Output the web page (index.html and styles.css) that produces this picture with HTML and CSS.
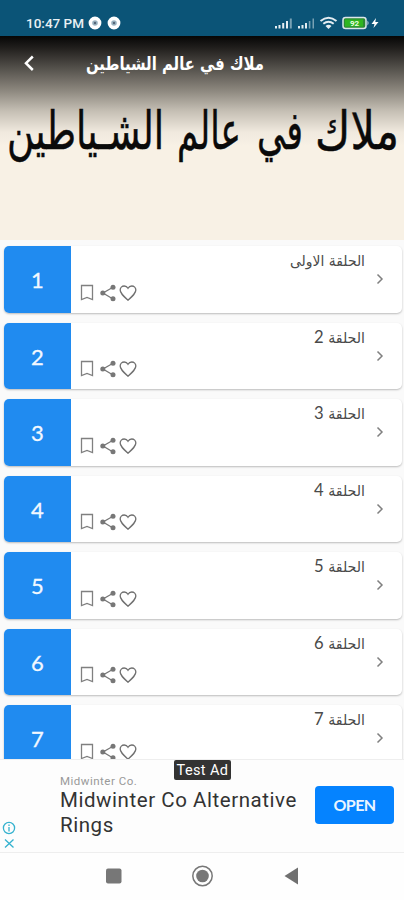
FILE: index.html
```html
<!DOCTYPE html>
<html lang="ar">
<head>
<meta charset="utf-8">
<title>ملاك في عالم الشياطين</title>
<link rel="stylesheet" href="styles.css">
</head>
<body>
<svg class="defs" width="0" height="0">
  <symbol id="bookmark" viewBox="0 0 14 18"><path d="M1.500 1.500h11v14L7 13.400 1.500 15.500z" fill="none" stroke="#808080" stroke-width="1.300"/></symbol>
  <symbol id="share" viewBox="0 0 16 18"><path d="M13 3.200 3 9l10 6" fill="none" stroke="#777" stroke-width="1.300"/><circle cx="13" cy="3.200" r="2.500" fill="#777"/><circle cx="2.800" cy="9" r="2.500" fill="#777"/><circle cx="13" cy="14.800" r="2.500" fill="#777"/></symbol>
  <symbol id="heart" viewBox="0 0 24 24"><path d="M12 20.600C6 15.200 2.600 12.200 2.600 8.500 2.600 5.700 4.800 3.600 7.500 3.600c1.800 0 3.500 1 4.500 2.700 1-1.700 2.700-2.700 4.500-2.700 2.700 0 4.900 2.100 4.900 4.900 0 3.700-3.400 6.700-9.400 12.100z" fill="none" stroke="#707070" stroke-width="1.600"/></symbol>
  <symbol id="chevron" viewBox="0 0 8 12"><path d="M1.500 1.500 6 6l-4.500 4.500" fill="none" stroke="#808080" stroke-width="1.500"/></symbol>
</svg>
<div class="screen">
  <div class="status">
    <span class="time">10:47 PM</span>
    <svg class="dots" width="34" height="14" viewBox="0 0 34 14"><g fill="#9ab3c1" stroke="#fff" stroke-width="3.600"><circle cx="8" cy="7" r="4.600"/><circle cx="27" cy="7" r="4.600"/></g><circle cx="8" cy="7" r="1.200" fill="#567"/><circle cx="27" cy="7" r="1.200" fill="#567"/></svg>
    <svg class="signals" width="106" height="16" viewBox="0 0 106 16">
      <g fill="#e4edf2"><path d="M1 11h2v2.500H1zM4.500 10h2v3.500h-2zM8.200 8h2v5.500h-2zM12 6h2v7.500h-2zM24 11h2v2.500h-2zM27.500 10h2v3.500h-2zM31 8h2v5.500h-2z"/><path opacity=".5" d="M15.800 3.500h2v10h-2zM34.800 6h1.600v7.500h-1.600zM38.500 3.500H40v10h-1.500z"/></g>
      <g fill="none" stroke="#e4edf2" stroke-width="2"><path d="M46.500 6q8-6.500 16 0M49.300 8.700q5.200-4 10.400 0"/></g><path d="m51.500 10.900 3 3 3-3q-3-2.200-6 0z" fill="#e4edf2"/>
      <rect x="69" y="2.500" width="23" height="11" rx="2.500" fill="#2d8934" stroke="#dce6ea" stroke-width="1.500"/><rect x="71" y="4.500" width="18" height="7" fill="#2fb520"/><path d="M93.500 5.500q2 2.500 0 5z" fill="#dce6ea"/>
      <text x="80.500" y="11" text-anchor="middle" class="pct">92</text>
      <path d="m102 3-4.500 6h3l-1 4 5-6h-3.200z" fill="#fff"/>
    </svg>
  </div>
  <div class="hero">
    <div class="bar">
      <svg class="back" width="12" height="18" viewBox="0 0 12 18"><path d="M9.800 2.500 3 9.200l6.800 6.800" fill="none" stroke="#fff" stroke-width="2.500"/></svg>
      <svg class="bar-title" width="180" height="30"><text x="179" y="21.500" direction="rtl" textLength="178" lengthAdjust="spacingAndGlyphs">ملاك في عالم الشياطين</text></svg>
    </div>
    <svg class="hero-title" width="404" height="104"><g direction="rtl"><text x="399" y="59" textLength="84" lengthAdjust="spacingAndGlyphs">ملاك</text><text x="303" y="59" textLength="46" lengthAdjust="spacingAndGlyphs">في</text><text x="241" y="59" textLength="64" lengthAdjust="spacingAndGlyphs">عالم</text><text x="164" y="59" textLength="157" lengthAdjust="spacingAndGlyphs">الشـياطين</text></g></svg>
  </div>
  <main class="list">
    <article class="card"><div class="num">1</div><div class="body"><svg class="name"><text x="85" y="20" direction="rtl" textLength="75" lengthAdjust="spacingAndGlyphs">الحلقة الاولى</text></svg><div class="actions"><svg class="i-b"><use href="#bookmark"/></svg><svg class="i-s"><use href="#share"/></svg><svg class="i-h"><use href="#heart"/></svg></div></div><svg class="chev"><use href="#chevron"/></svg></article>
    <article class="card"><div class="num">2</div><div class="body"><svg class="name"><text x="85" y="20" direction="rtl" textLength="51" lengthAdjust="spacingAndGlyphs">الحلقة <tspan>2</tspan></text></svg><div class="actions"><svg class="i-b"><use href="#bookmark"/></svg><svg class="i-s"><use href="#share"/></svg><svg class="i-h"><use href="#heart"/></svg></div></div><svg class="chev"><use href="#chevron"/></svg></article>
    <article class="card"><div class="num">3</div><div class="body"><svg class="name"><text x="85" y="20" direction="rtl" textLength="51" lengthAdjust="spacingAndGlyphs">الحلقة <tspan>3</tspan></text></svg><div class="actions"><svg class="i-b"><use href="#bookmark"/></svg><svg class="i-s"><use href="#share"/></svg><svg class="i-h"><use href="#heart"/></svg></div></div><svg class="chev"><use href="#chevron"/></svg></article>
    <article class="card"><div class="num">4</div><div class="body"><svg class="name"><text x="85" y="20" direction="rtl" textLength="51" lengthAdjust="spacingAndGlyphs">الحلقة <tspan>4</tspan></text></svg><div class="actions"><svg class="i-b"><use href="#bookmark"/></svg><svg class="i-s"><use href="#share"/></svg><svg class="i-h"><use href="#heart"/></svg></div></div><svg class="chev"><use href="#chevron"/></svg></article>
    <article class="card"><div class="num">5</div><div class="body"><svg class="name"><text x="85" y="20" direction="rtl" textLength="51" lengthAdjust="spacingAndGlyphs">الحلقة <tspan>5</tspan></text></svg><div class="actions"><svg class="i-b"><use href="#bookmark"/></svg><svg class="i-s"><use href="#share"/></svg><svg class="i-h"><use href="#heart"/></svg></div></div><svg class="chev"><use href="#chevron"/></svg></article>
    <article class="card"><div class="num">6</div><div class="body"><svg class="name"><text x="85" y="20" direction="rtl" textLength="51" lengthAdjust="spacingAndGlyphs">الحلقة <tspan>6</tspan></text></svg><div class="actions"><svg class="i-b"><use href="#bookmark"/></svg><svg class="i-s"><use href="#share"/></svg><svg class="i-h"><use href="#heart"/></svg></div></div><svg class="chev"><use href="#chevron"/></svg></article>
    <article class="card"><div class="num">7</div><div class="body"><svg class="name"><text x="85" y="20" direction="rtl" textLength="51" lengthAdjust="spacingAndGlyphs">الحلقة <tspan>7</tspan></text></svg><div class="actions"><svg class="i-b"><use href="#bookmark"/></svg><svg class="i-s"><use href="#share"/></svg><svg class="i-h"><use href="#heart"/></svg></div></div><svg class="chev"><use href="#chevron"/></svg></article>
  </main>
  <section class="ad" lang="en">
    <svg class="ad-marks" width="14" height="32" viewBox="0 0 14 32"><g fill="none" stroke="#35b2cf" stroke-width="1.300"><circle cx="7" cy="7" r="5.600"/><path d="M7 6v4.500M7 3.500v1.400M3 18.500l8.500 8M11.500 18.500l-8.500 8"/></g></svg>
    <div class="ad-text"><div class="ad-brand">Midwinter Co.</div><div class="ad-head">Midwinter Co Alternative<br>Rings</div></div>
    <div class="open"><span>OPEN</span></div>
    <div class="test">Test Ad</div>
  </section>
  <nav class="nav">
    <svg width="404" height="47" viewBox="0 0 404 47"><rect x="106" y="15.500" width="15.500" height="15" rx="2" fill="#777"/><circle cx="202.500" cy="23" r="9.700" fill="none" stroke="#777" stroke-width="1.500"/><circle cx="202.500" cy="23" r="6.300" fill="#777"/><path d="M284.500 23 298 14.500v17z" fill="#707070"/></svg>
  </nav>
</div>
</body>
</html>
```
FILE: styles.css
```css
* { box-sizing: border-box; }
body { margin: 0; background: #fdfdfd; }
svg { display: block; flex: none; }
.defs { position: absolute; }
.screen { width: 404px; height: 900px; overflow: hidden; display: flex; flex-direction: column; }
.status { height: 36px; flex: none; background: #0b5477; display: flex; align-items: center; padding: 10px 24px 0 26px; }
.time { font: 500 13.5px/16px Roboto, sans-serif; color: #e9f0f4; width: 61px; white-space: nowrap; }
.signals { margin-left: auto; }
.pct { font: 700 8px Roboto, sans-serif; fill: #e8ffe0; }
.hero { height: 204px; flex: none; background: linear-gradient(#060606 0, #211f1d 12px, #8b867d 54px, #c5bfb4 75px, #f0e9de 96px, #f8f1e5 110px); }
.bar { height: 54px; display: flex; align-items: center; padding-left: 23px; }
.bar-title { margin-left: 50px; overflow: visible; }
.bar-title text { font: 700 18px "DejaVu Sans", sans-serif; fill: #fff; }
.hero-title { overflow: visible; }
.hero-title text { font: 53px "DejaVu Sans", sans-serif; fill: #0a0a0a; stroke: #0a0a0a; stroke-width: .5px; }
.list { height: 519px; flex: none; overflow: hidden; background: #fafafa; padding: 6px 2px 0 4px; display: flex; flex-direction: column; gap: 10px; }
.card { height: 66.5px; flex: none; display: flex; background: #fff; border-radius: 5px; box-shadow: 0 1px 2px rgba(0,0,0,.25); overflow: hidden; }
.num { width: 67px; background: #208bf0; color: #f2f8ff; font: 22px/68px Lato, sans-serif; text-align: center; -webkit-text-stroke: .3px #f2f8ff; }
.body { width: 294px; display: flex; flex-direction: column; justify-content: space-between; padding-bottom: 10px; }
.name { width: 85px; height: 28px; align-self: flex-end; overflow: visible; }
.name text { font: 14.5px "DejaVu Sans", sans-serif; fill: #4a4a4a; }
.name tspan { font: 17px Lato, sans-serif; }
.actions { display: flex; align-items: center; padding-left: 9px; height: 20px; }
.i-b { width: 14px; height: 18px; }
.i-s { width: 16px; height: 18px; margin-left: 6px; }
.i-h { width: 20px; height: 20px; margin-left: 2px; }
.chev { width: 8px; height: 12px; margin: 27px 0 0 11px; }
.ad { position: relative; height: 94px; flex: none; background: #fdfdfd; border-top: 1px solid #eee; border-bottom: 1px solid #eee; display: flex; align-items: flex-start; }
.ad-marks { margin: 61px 0 0 2px; }
.ad-text { width: 255px; margin-left: 44px; padding-top: 14px; font-family: Roboto, sans-serif; white-space: nowrap; }
.ad-brand { font-size: 11.5px; line-height: 14px; letter-spacing: .5px; color: #999; }
.ad-head { font-size: 20.5px; line-height: 24.5px; letter-spacing: .55px; color: #333; }
.open { width: 79px; height: 38px; margin-top: 26px; border-radius: 4px; background: #0583ff; color: #eaf5ff; font: 700 16px/38px Lato, sans-serif; letter-spacing: -.6px; text-align: center; }
.test { position: absolute; left: 174px; top: 0; width: 57px; height: 20px; border-radius: 2px; background: #333; color: #fff; font: 14.5px/21px Roboto, sans-serif; text-align: center; letter-spacing: .4px; white-space: nowrap; }
.nav { height: 47px; flex: none; background: #fefefe; }
```
